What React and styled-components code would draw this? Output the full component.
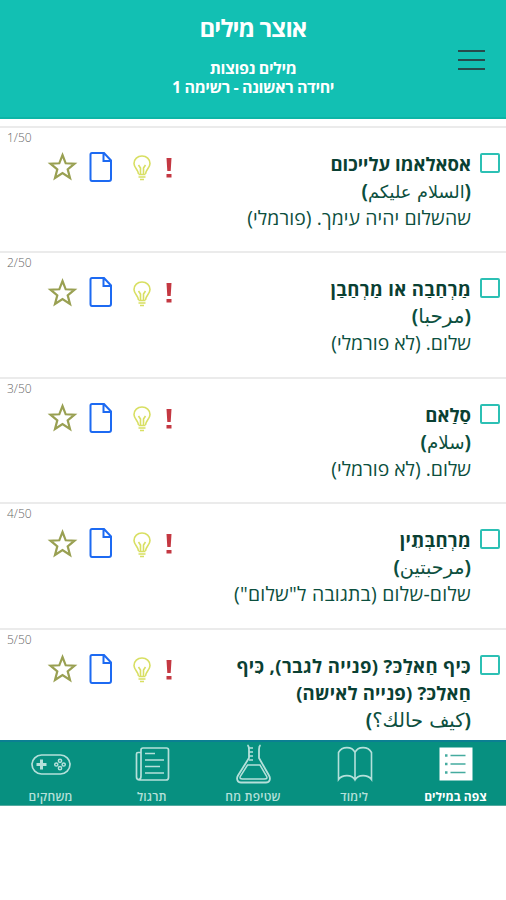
import React from 'react';
import styled, { createGlobalStyle } from 'styled-components';

const GlobalStyle = createGlobalStyle`
  * {
    box-sizing: border-box;
  }
  body {
    margin: 0;
    background: #fff;
    font-family: 'Open Sans', 'DejaVu Sans', sans-serif;
  }
`;

const Container = styled.div`
  display: flex;
  flex-direction: column;
  height: 900px;
  width: 506px;
  direction: rtl;
  overflow: hidden;
`;

const Header = styled.header`
  display: grid;
  grid-template-columns: 69px 1fr 69px;
  flex: none;
  height: 119px;
  padding-top: 12px;
  background: #12c0b3;
  border-bottom: 2px solid #0cb5a6;
  color: #fff;
`;

const MenuButton = styled.button`
  display: flex;
  flex-direction: column;
  gap: 7px;
  width: 27px;
  height: 20px;
  margin: 38px 21px 0 0;
  padding: 0;
  border: 0;
  background: none;
`;

const MenuBar = styled.span`
  flex: none;
  width: 27px;
  height: 2px;
  background: #264b4c;
`;

const Titles = styled.div`
  text-align: center;
`;

const Title = styled.h1`
  margin: 0 0 15px;
  font-size: 24px;
  line-height: 32px;
  font-weight: 700;
  letter-spacing: -0.9px;
`;

const Subtitle = styled.div`
  font-size: 16px;
  line-height: 19px;
  font-weight: 700;
  letter-spacing: -0.4px;
`;

const List = styled.main`
  flex: none;
  height: 621px;
  padding-top: 6.5px;
  overflow: hidden;
`;

const Row = styled.section`
  display: grid;
  grid-template-columns: 25px 1fr 202px;
  height: 125.5px;
  padding: 24px 6px 0 0;
  border-top: 2px solid #ebebeb;
`;

const Checkbox = styled.span`
  width: 20px;
  height: 20px;
  margin-top: 1px;
  border: 2px solid #2cc0b4;
  border-radius: 2px;
`;

const Words = styled.div`
  margin-top: -2px;
  padding-right: 4px;
  color: #0c4f3e;
  white-space: nowrap;
`;

const Term = styled.div`
  font-size: 18.5px;
  line-height: 27px;
  font-weight: 700;
  color: #0a4033;
  letter-spacing: ${(props) => props.$spacing || 0}px;
`;

const Arabic = styled.div`
  height: 27px;
  font-size: 19px;
  line-height: 28px;
  font-weight: 700;
`;

const ArabicText = styled.span`
  display: inline-block;
  font-family: 'DejaVu Sans', sans-serif;
  font-size: ${(props) => props.$size}px;
  line-height: 20px;
  font-weight: 400;
`;

const Meaning = styled.div`
  font-size: 19.4px;
  line-height: 27px;
  letter-spacing: ${(props) => props.$spacing || 0}px;
`;

const Side = styled.div`
  direction: ltr;
  margin-top: -22px;
  padding-left: 7px;
`;

const Counter = styled.div`
  height: 21px;
  font-size: 12px;
  line-height: 16px;
  font-weight: 300;
  color: #666;
`;

const Actions = styled.div`
  display: flex;
  align-items: center;
  height: 32px;
  padding-left: 40px;
`;

const StarIcon = styled.svg`
  width: 31px;
  height: 31px;
  margin-right: 11px;
`;

const PageIcon = styled.svg`
  width: 24px;
  height: 32px;
  margin-right: 20px;
`;

const BulbIcon = styled.svg`
  width: 18px;
  height: 28px;
  margin: 3px 14px 0 0;
`;

const AlertIcon = styled.svg`
  width: 8px;
  height: 20px;
  margin-top: 2px;
`;

const Nav = styled.nav`
  display: grid;
  grid-template-columns: repeat(5, 1fr);
  flex: none;
  height: 66px;
  background: #079080;
  border-top: 2px solid #0b7f92;
  border-bottom: 1px solid #54aaa0;
`;

const Tab = styled.div`
  display: flex;
  flex-direction: column;
  align-items: center;
  padding-top: 1px;
  color: ${(props) => (props.$active ? '#fff' : '#b5e0da')};
`;

const TabIcon = styled.svg`
  width: 42px;
  height: 42px;
`;

const TabLabel = styled.span`
  margin-top: 2.5px;
  font-size: 12px;
  line-height: 17px;
  font-weight: ${(props) => (props.$active ? 700 : 600)};
  letter-spacing: ${(props) => props.$spacing}px;
  white-space: nowrap;
`;

const words = [
  {
    term: [{ text: 'אסאלאמו עלייכום' }],
    arabic: 'السلام عليكم',
    arabicSize: 17.7,
    meaning: 'שהשלום יהיה עימך. (פורמלי)',
    meaningSpacing: 0.1,
  },
  {
    term: [{ text: 'מַרְחַבַה או מַרְחַבַן', spacing: 0.35 }],
    arabic: 'مرحبا',
    arabicSize: 20,
    meaning: 'שלום. (לא פורמלי)',
  },
  {
    term: [{ text: 'סַלַאם' }],
    arabic: 'سلام',
    arabicSize: 18.3,
    meaning: 'שלום. (לא פורמלי)',
  },
  {
    term: [{ text: 'מַרְחַבְּתֵין', spacing: 0.3 }],
    arabic: 'مرحبتين',
    arabicSize: 19.2,
    meaning: 'שלום-שלום (בתגובה ל"שלום")',
    meaningSpacing: 0.25,
  },
  {
    term: [
      { text: 'כִּיף חַאלַכּ? (פנייה לגבר), כִּיף', spacing: 0.37 },
      { text: 'חַאלִכּ? (פנייה לאישה)', spacing: 0.2 },
    ],
    arabic: 'كيف حالك؟',
    arabicSize: 19.5,
  },
];

const ListIcon = () => (
  <TabIcon viewBox='0 0 42 42'>
    <path fill='#fff' d='M5.500 4.500h33v33h-33z' />
    <g stroke='#079080' strokeWidth='1.500' opacity='.75'>
      <path d='M16.500 12.500h15M16.500 21h15M16.500 29.500h15' />
      <path strokeWidth='2.500' d='M11 12.500h2.500M11 21h2.500M11 29.500h2.500' />
    </g>
  </TabIcon>
);

const BookIcon = () => (
  <TabIcon viewBox='0 0 42 42' fill='none' stroke='currentColor' strokeWidth='1.600'>
    <path d='M22 9.500C19 3 9 3 5.500 9.500V36.500C9 31.500 19 31 22 37C25 31 35 31.500 38.500 36.500V9.500C35 3 25 3 22 9.500V37' />
  </TabIcon>
);

const FlaskIcon = () => (
  <TabIcon viewBox='0 0 42 42' fill='none' stroke='currentColor'>
    <path
      strokeWidth='1.800'
      d='M15.500 2C17 3 17 4.500 17 6.500V15L6 32.500C4 36 5.500 39.500 9 39.500H34C37.500 39.500 39 36 37 32.500L27 15V6.500C27 4.500 27 3 28.500 2'
    />
    <path strokeWidth='1.300' d='M17 5h4M17 9h4M17 13h4M17 17h4' />
    <path strokeWidth='1.500' d='M15.500 22H28L34.500 33C35.500 35 35 36 32.500 36H10.500C8 36 7.500 35 8.500 33Z' />
  </TabIcon>
);

const ArticleIcon = () => (
  <TabIcon viewBox='0 0 42 42' fill='none' stroke='currentColor' strokeWidth='1.700'>
    <path d='M10 33V7Q10 5 12 5H35.500Q37.500 5 37.500 7V34.500Q37.500 37 35 37H8.500Q5.500 37 5.500 34V11Q5.500 9.500 7 9.500H10M10 33Q10 36.500 7.500 36.500' />
    <path d='M14 10.500H24M14 17H33M14 23.500H29M14 30H33' />
  </TabIcon>
);

const GamepadIcon = () => (
  <TabIcon viewBox='0 0 42 42' fill='none' stroke='currentColor' strokeWidth='1.700'>
    <rect x='2' y='12' width='38' height='19' rx='9.500' />
    <path strokeWidth='3' d='M6.500 21.500h10M11.500 16.500v10' />
    <g strokeWidth='1.500'>
      <circle cx='30' cy='17.800' r='1.600' />
      <circle cx='30' cy='25.200' r='1.600' />
      <circle cx='26.300' cy='21.500' r='1.600' />
      <circle cx='33.700' cy='21.500' r='1.600' />
    </g>
  </TabIcon>
);

const tabs = [
  { label: 'צפה במילים', Icon: ListIcon, active: true, spacing: 0 },
  { label: 'לימוד', Icon: BookIcon, spacing: 0.2 },
  { label: 'שטיפת מח', Icon: FlaskIcon, spacing: 0.2 },
  { label: 'תרגול', Icon: ArticleIcon, spacing: 0.1 },
  { label: 'משחקים', Icon: GamepadIcon, spacing: 0.2 },
];

const WordRow = ({ word, position }) => (
  <Row>
    <Checkbox />
    <Words>
      {word.term.map((line) => (
        <Term key={line.text} $spacing={line.spacing}>
          {line.text}
        </Term>
      ))}
      <Arabic>
        (<ArabicText $size={word.arabicSize}>{word.arabic}</ArabicText>)
      </Arabic>
      {word.meaning && (
        <Meaning $spacing={word.meaningSpacing}>{word.meaning}</Meaning>
      )}
    </Words>
    <Side>
      <Counter>{position}/50</Counter>
      <Actions>
        <StarIcon viewBox='0 0 31 31' fill='none' stroke='#99a052' strokeWidth='2.200'>
          <path d='M15.500 4L18.700 12.300L27.500 12.700L20.700 18.300L23 27L15.500 22L8 27L10.300 18.300L3.500 12.700L12.300 12.300Z' />
        </StarIcon>
        <PageIcon viewBox='0 0 24 32' fill='none' stroke='#1d6af2' strokeWidth='2'>
          <path d='M3 2H15L22 9.500V28Q22 30 20 30H3Q1.500 30 1.500 28V3.500Q1.500 2 3 2ZM14.500 2V10H22' />
        </PageIcon>
        <BulbIcon viewBox='0 0 18 28' fill='none' stroke='#d8df62' strokeWidth='1.600'>
          <path d='M5.500 20C5.500 16 1 14 1 9.500C1 5 4.500 2 9 2S17 5 17 9.500C17 14 12.500 16 12.500 20' />
          <path d='M7.500 20V14L5.500 11M10.500 20V14L12.500 11M5.500 20.500H12.500M5.500 23H12.500M7 25.500H11' />
        </BulbIcon>
        <AlertIcon viewBox='0 0 8 20' fill='#c43842'>
          <path d='M1.500 0H6.500L5.700 13H2.300ZM1.500 16H6.500V19.500H1.500Z' />
        </AlertIcon>
      </Actions>
    </Side>
  </Row>
);

const App = () => (
  <>
    <GlobalStyle />
    <Container>
      <Header>
        <MenuButton>
          <MenuBar />
          <MenuBar />
          <MenuBar />
        </MenuButton>
        <Titles>
          <Title>אוצר מילים</Title>
          <Subtitle>
            מילים נפוצות
            <br />
            יחידה ראשונה - רשימה 1
          </Subtitle>
        </Titles>
      </Header>
      <List>
        {words.map((word, index) => (
          <WordRow key={word.arabic} word={word} position={index + 1} />
        ))}
      </List>
      <Nav>
        {tabs.map(({ label, Icon, active, spacing }) => (
          <Tab key={label} $active={active}>
            <Icon />
            <TabLabel $active={active} $spacing={spacing}>
              {label}
            </TabLabel>
          </Tab>
        ))}
      </Nav>
    </Container>
  </>
);

export default App;
